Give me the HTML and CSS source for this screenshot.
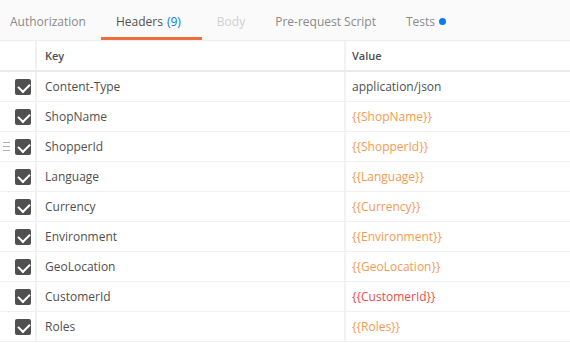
FILE: index.html
```html
<!DOCTYPE html>
<html>
<head>
<meta charset="utf-8">
<link rel="stylesheet" href="styles.css">
</head>
<body>
<div class="tabs">
  <div class="tab first">Authorization</div>
  <div class="tab active">Headers <span class="count">(9)</span></div>
  <div class="tab disabled">Body</div>
  <div class="tab">Pre-request Script</div>
  <div class="tab">Tests <span class="dot"></span></div>
</div>
<div class="table">
  <div class="row head">
    <div class="c-check"></div>
    <div class="c-key">Key</div>
    <div class="c-val">Value</div>
  </div>
  <div class="row"><div class="c-check"><span class="cb"></span></div><div class="c-key">Content-Type</div><div class="c-val plain">application/json</div></div>
  <div class="row"><div class="c-check"><span class="cb"></span></div><div class="c-key">ShopName</div><div class="c-val var">{{ShopName}}</div></div>
  <div class="row"><div class="c-check"><span class="grip"></span><span class="cb"></span></div><div class="c-key">ShopperId</div><div class="c-val var">{{ShopperId}}</div></div>
  <div class="row"><div class="c-check"><span class="cb"></span></div><div class="c-key">Language</div><div class="c-val var">{{Language}}</div></div>
  <div class="row"><div class="c-check"><span class="cb"></span></div><div class="c-key">Currency</div><div class="c-val var">{{Currency}}</div></div>
  <div class="row"><div class="c-check"><span class="cb"></span></div><div class="c-key">Environment</div><div class="c-val var">{{Environment}}</div></div>
  <div class="row"><div class="c-check"><span class="cb"></span></div><div class="c-key">GeoLocation</div><div class="c-val var">{{GeoLocation}}</div></div>
  <div class="row"><div class="c-check"><span class="cb"></span></div><div class="c-key">CustomerId</div><div class="c-val unresolved">{{CustomerId}}</div></div>
  <div class="row"><div class="c-check"><span class="cb"></span></div><div class="c-key">Roles</div><div class="c-val var">{{Roles}}</div></div>
</div>
</body>
</html>
```
FILE: styles.css
```css
* { box-sizing: border-box; }
html, body {
  margin: 0;
  padding: 0;
  background: #fff;
  font-family: "Open Sans", "Liberation Sans", sans-serif;
  color: #505050;
}
.tabs {
  display: flex;
  height: 41px;
  background: #fafafa;
  border-bottom: 1px solid #ececec;
}
.tab {
  position: relative;
  padding: 3px 15px 0;
  font-size: 12px;
  color: #8a8a8a;
  white-space: nowrap;
  display: flex;
  align-items: center;
}
.tab.first { padding-left: 10px; }
.tab.active { color: #505050; padding-right: 21px; }
.tab.active::after {
  content: "";
  position: absolute;
  left: 0;
  right: 0;
  bottom: 0;
  height: 3px;
  background: #f26b3a;
}
.tab .count { color: #097bed; margin-left: 4px; }
.tab.disabled { color: #d0d0d0; }
.tab .dot {
  display: inline-block;
  width: 7px;
  height: 7px;
  border-radius: 50%;
  background: #097bed;
  margin-left: 4px;
}
.table { display: flex; flex-direction: column; }
.row {
  display: flex;
  height: 30px;
  border-bottom: 1px solid #f0f0f0;
}
.row.head { height: 31px; border-bottom: 2px solid #ebebeb; }
.c-check {
  width: 37px;
  flex: none;
  border-right: 2px solid #f2f2f2;
  display: flex;
  align-items: center;
  justify-content: flex-end;
  padding-right: 4px;
  position: relative;
}
.c-key {
  width: 309px;
  flex: none;
  border-right: 2px solid #f2f2f2;
  padding-left: 8px;
  display: flex;
  align-items: center;
  font-size: 12px;
  color: #505050;
}
.c-val {
  flex: 1;
  padding-left: 6px;
  display: flex;
  align-items: center;
  font-size: 12px;
}
.head .c-key, .head .c-val {
  font-size: 11px;
  font-weight: 600;
  color: #505050;
}
.plain { color: #505050; }
.var { color: #f79a4f; }
.unresolved { color: #ed4b48; }
.cb {
  width: 16px;
  height: 16px;
  border-radius: 2px;
  background: #505050;
  position: relative;
}
.cb::after {
  content: "";
  position: absolute;
  left: 5px;
  top: 2px;
  width: 6px;
  height: 9px;
  border-right: 2px solid #fff;
  border-bottom: 2px solid #fff;
  transform: rotate(45deg);
}
.grip {
  position: absolute;
  left: 3px;
  top: 10px;
  width: 7px;
  height: 9px;
  background: repeating-linear-gradient(to bottom, #b0b0b0 0, #b0b0b0 1px, transparent 1px, transparent 4px);
}
```
